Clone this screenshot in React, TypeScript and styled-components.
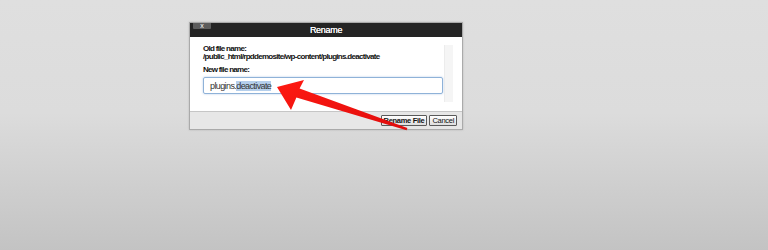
import React from 'react';
import styled, { createGlobalStyle } from 'styled-components';

const GlobalStyle = createGlobalStyle`
    html, body {
        margin: 0;
        padding: 0;
    }
    body {
        font-family: "Liberation Sans", Arial, sans-serif;
    }
`;

function Arrow() {
    return (
        <ArrowLayer width="768" height="250" viewBox="0 0 768 250">
            <defs>
                <linearGradient id="arrowRed" x1="0" y1="0" x2="1" y2="1">
                    <stop offset="0" stopColor="#ff1a12" />
                    <stop offset="1" stopColor="#e00c0c" />
                </linearGradient>
            </defs>
            <polygon
                points="277,87 304,80 299.6,88.6 407.4,128 406.6,130.2 296.4,97.4 291,110"
                fill="url(#arrowRed)"
            />
        </ArrowLayer>
    );
}

function App() {
    return (
        <Page>
            <GlobalStyle />
            <Dialog>
                <TitleBar>
                    <CloseTab>x</CloseTab>
                    <Title>Rename</Title>
                    <span />
                </TitleBar>
                <Body>
                    <Fields>
                        <Label>Old file name:</Label>
                        <Label>/public_html/rpddemosite/wp-content/plugins.deactivate</Label>
                        <Label $spaced>New file name:</Label>
                        <NameInput>
                            <span>plugins.</span>
                            <Selected>deactivate</Selected>
                        </NameInput>
                    </Fields>
                    <ScrollTrack />
                </Body>
                <Footer>
                    <Button $primary>Rename File</Button>
                    <Button>Cancel</Button>
                </Footer>
            </Dialog>
            <Arrow />
        </Page>
    );
}

const Page = styled.div`
    position: relative;
    height: 250px;
    box-sizing: border-box;
    padding: 22px 0 0 189px;
    background: linear-gradient(180deg, #dfdfdf 0%, #dcdcdc 45%, #c3c3c3 100%);
    overflow: hidden;
`;

const ArrowLayer = styled.svg`
    position: absolute;
    left: 0;
    top: 0;
    pointer-events: none;
`;

const Dialog = styled.div`
    width: 274px;
    box-sizing: border-box;
    border: 1px solid #aaaaaa;
    background: #ffffff;
    box-shadow: 0 0 2px rgba(0, 0, 0, 0.15);
`;

const TitleBar = styled.div`
    display: grid;
    grid-template-columns: 1fr auto 1fr;
    height: 14px;
    background: #242424;
    color: #ffffff;
`;

const CloseTab = styled.div`
    justify-self: start;
    align-self: start;
    margin-left: 3px;
    width: 18px;
    height: 6px;
    background: #5c5c5c;
    border-radius: 0 0 1px 1px;
    font-size: 7px;
    line-height: 5px;
    text-align: center;
    color: #ffffff;
`;

const Title = styled.div`
    font-size: 9px;
    line-height: 14px;
    letter-spacing: -0.3px;
    text-shadow: 0 0 0.4px #ffffff;
`;

const Body = styled.div`
    display: flex;
    height: 74px;
    box-sizing: border-box;
    padding: 8px 9px 9px 13px;
`;

const Fields = styled.div`
    flex: 1;
    display: flex;
    flex-direction: column;
    padding-right: 1px;
`;

const Label = styled.div<{ $spaced?: boolean }>`
    font-size: 8px;
    line-height: 8px;
    font-weight: bold;
    letter-spacing: -0.7px;
    color: #111111;
    white-space: nowrap;
    margin-top: ${p => (p.$spaced ? '5px' : '0')};
`;

const NameInput = styled.div`
    display: flex;
    align-items: center;
    margin-top: 3px;
    height: 17px;
    box-sizing: border-box;
    padding-left: 6px;
    border: 1px solid #8fb2d8;
    border-radius: 2px;
    box-shadow: 0 0 2px rgba(90, 140, 210, 0.5);
    font-size: 9px;
    letter-spacing: -0.6px;
    color: #333333;
    white-space: nowrap;
`;

const Selected = styled.span`
    background: #b5cfec;
    line-height: 10px;
`;

const ScrollTrack = styled.div`
    width: 9px;
    background: #f5f5f5;
    border-left: 1px solid #ececec;
    box-sizing: border-box;
`;

const Footer = styled.div`
    display: flex;
    justify-content: flex-end;
    align-items: center;
    gap: 2px;
    height: 18px;
    box-sizing: border-box;
    padding-right: 5px;
    background: #e7e7e7;
    border-top: 1px solid #c6c6c6;
`;

const Button = styled.div<{ $primary?: boolean }>`
    height: 11px;
    box-sizing: border-box;
    padding: 0 2px;
    border: 1px solid #5a5a5a;
    border-radius: 1px;
    background: linear-gradient(180deg, #ffffff 0%, #dedede 100%);
    font-size: 7.5px;
    line-height: 9px;
    font-weight: ${p => (p.$primary ? 'bold' : 'normal')};
    letter-spacing: -0.3px;
    color: #111111;
`;

export default App;
